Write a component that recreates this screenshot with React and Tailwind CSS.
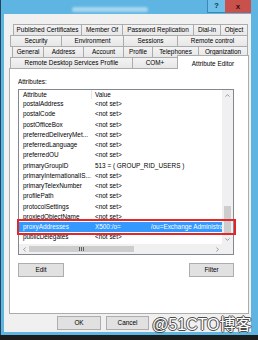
import { ChevronUp, ChevronDown, ChevronLeft, ChevronRight } from 'lucide-react';

const TAB_ROWS = [
  {
    offset: 'ml-[9px]',
    tabs: [
      ['Published Certificates', 'w-[69px]'],
      ['Member Of', 'w-[42px]'],
      ['Password Replication', 'w-[72px]'],
      ['Dial-in', 'w-[28px]'],
      ['Object', 'w-[28px]'],
    ],
  },
  {
    offset: 'ml-[6px]',
    tabs: [
      ['Security', 'w-[52px]'],
      ['Environment', 'w-[63px]'],
      ['Sessions', 'w-[55px]'],
      ['Remote control', 'w-[71px]'],
    ],
  },
  {
    offset: 'ml-[8px]',
    tabs: [
      ['General', 'w-[32px]'],
      ['Address', 'w-[41px]'],
      ['Account', 'w-[41px]'],
      ['Profile', 'w-[30px]'],
      ['Telephones', 'w-[47px]'],
      ['Organization', 'w-[50px]'],
    ],
  },
];

const ATTRS = [
  ['postalAddress', '<not set>'],
  ['postalCode', '<not set>'],
  ['postOfficeBox', '<not set>'],
  ['preferredDeliveryMet...', '<not set>'],
  ['preferredLanguage', '<not set>'],
  ['preferredOU', '<not set>'],
  ['primaryGroupID', '513 = ( GROUP_RID_USERS )'],
  ['primaryInternationalIS...', '<not set>'],
  ['primaryTelexNumber', '<not set>'],
  ['profilePath', '<not set>'],
  ['protocolSettings', '<not set>'],
  ['proxiedObjectName', '<not set>'],
  ['proxyAddresses', null],
  ['publicDelegates', '<not set>'],
];

const tabBase =
  'h-[12px] -ml-px first:ml-0 border border-[#acacac] bg-linear-to-b from-[#f3f3f3] to-[#e7e7e7] flex items-center justify-center whitespace-nowrap leading-[10px]';

function Tab({ label, width }) {
  return <div className={`${tabBase} ${width}`}>{label}</div>;
}

function WinButton({ children, width }) {
  return (
    <div
      className={`${width} h-[14px] bg-[#e1e1e1] border border-[#adadad] flex items-center justify-center leading-[10px]`}
    >
      {children}
    </div>
  );
}

function ListRow({ attr, value }) {
  const selected = value === null;
  return (
    <div
      className={`h-[10.25px] shrink-0 flex items-center leading-[10px] whitespace-nowrap ${
        selected ? 'bg-[#3399ff] text-white' : ''
      }`}
    >
      <div className="w-[73px] shrink-0 pl-[4px] overflow-hidden">{attr}</div>
      <div className="flex-1 min-w-0 pl-[3px] overflow-hidden flex">
        {selected ? (
          <>
            <span>X500:/o=</span>
            <span className="w-[30px] shrink-0" />
            <span className="overflow-hidden">/ou=Exchange Administrati</span>
          </>
        ) : (
          value
        )}
      </div>
    </div>
  );
}

export default function App() {
  return (
    <div
      className="w-[258px] h-[340px] bg-[#1c1c1c] overflow-hidden text-[6.4px] text-black"
      style={{ fontFamily: '"Liberation Sans", Arial, sans-serif' }}
    >
      <div className="h-[335px] bg-[#5fb5e2] border-l border-[#22445a] pl-[3px] pr-[7px] pb-[3px] flex flex-col">
        {/* Title bar */}
        <div className="h-[14px] shrink-0 flex">
          <div className="flex-1 flex pt-[7px] pl-[68px]">
            <div className="w-[76px] h-[5px] bg-[#a6d6ef] blur-[1px] rounded-sm" />
          </div>
          <div className="w-[18px] h-[13px] bg-[#6fc0e8] border-l border-b border-[#3f87b3] flex items-center justify-center text-[8px] font-bold text-[#123552] leading-none">
            ?
          </div>
          <div className="w-[26px] h-[13px] bg-[#c9514b] flex items-center justify-center text-[8px] font-bold text-[#3a0d0b] leading-none">
            x
          </div>
        </div>

        {/* Dialog body */}
        <div className="flex-1 bg-[#f0f0f0] flex flex-col relative pt-[10px]">
          {/* Tabs */}
          {TAB_ROWS.map((row, i) => (
            <div key={i} className={`flex -mt-px first:mt-0 ${row.offset}`}>
              {row.tabs.map(([label, width]) => (
                <Tab key={label} label={label} width={width} />
              ))}
            </div>
          ))}
          <div className="flex -mt-px ml-[6px] items-start">
            <Tab label="Remote Desktop Services Profile" width="w-[123px]" />
            <Tab label="COM+" width="w-[46px]" />
            <div className="relative z-10 -ml-px -mt-[2px] w-[72px] h-[14px] bg-white border border-b-0 border-[#acacac] flex justify-center pt-[3px] leading-[10px] whitespace-nowrap">
              Attribute Editor
            </div>
          </div>

          {/* Tab panel */}
          <div className="-mt-px ml-[5px] w-[240px] h-[246px] bg-white border border-[#acacac] pl-[8px] pt-[9px] flex flex-col">
            <div className="leading-[8px]">Attributes:</div>

            <div className="relative mt-[3px] w-[216px] h-[166px] border border-[#828790] flex flex-col">
              <div className="flex-1 min-h-0 flex">
                <div className="flex-1 min-w-0 flex flex-col overflow-hidden">
                  <div className="h-[9px] shrink-0 flex items-center leading-[9px]">
                    <div className="w-[73px] pl-[4px] border-r border-[#e5e5e5] h-full flex items-center">
                      Attribute
                    </div>
                    <div className="pl-[3px]">Value</div>
                  </div>
                  {ATTRS.map(([attr, value]) => (
                    <ListRow key={attr} attr={attr} value={value} />
                  ))}
                </div>
                <div className="w-[11px] shrink-0 bg-[#f0f0f0] flex flex-col">
                  <div className="h-[10px] flex items-center justify-center text-[#606060]">
                    <ChevronUp size={7} strokeWidth={2} />
                  </div>
                  <div className="flex-1" />
                  <div className="h-[27px] mx-[2px] mb-[1px] bg-[#cdcdcd]" />
                  <div className="h-[10px] flex items-center justify-center text-[#606060]">
                    <ChevronDown size={7} strokeWidth={2} />
                  </div>
                </div>
              </div>
              <div className="h-[10px] shrink-0 flex bg-[#f0f0f0]">
                <div className="w-[10px] flex items-center justify-center text-[#606060]">
                  <ChevronLeft size={7} strokeWidth={2} />
                </div>
                <div className="w-[105px] my-[2px] bg-[#cdcdcd] flex items-center justify-center">
                  <div className="flex gap-[1px]">
                    <div className="w-px h-[4px] bg-[#606060]" />
                    <div className="w-px h-[4px] bg-[#606060]" />
                    <div className="w-px h-[4px] bg-[#606060]" />
                  </div>
                </div>
                <div className="flex-1" />
                <div className="w-[10px] flex items-center justify-center text-[#606060]">
                  <ChevronRight size={7} strokeWidth={2} />
                </div>
                <div className="w-[11px] bg-[#f0f0f0]" />
              </div>

              {/* Red highlight annotation */}
              <div className="absolute left-[-2px] top-[129px] w-[219px] h-[16px] border-2 border-[#e3262a] z-20" />
            </div>

            <div className="mt-[8px] w-[216px] flex justify-between">
              <WinButton width="w-[46px]">Edit</WinButton>
              <WinButton width="w-[45px]">Filter</WinButton>
            </div>
          </div>

          {/* Dialog buttons */}
          <div className="mt-[2px] ml-[53px] flex gap-[5px]">
            <WinButton width="w-[44px]">OK</WinButton>
            <WinButton width="w-[43px]">Cancel</WinButton>
          </div>

          {/* Watermark */}
          <div
            className="absolute left-[148px] top-[302px] text-[16px] leading-[18px] text-white whitespace-nowrap [text-shadow:1px_0_#4a4a4a,-1px_0_#4a4a4a,0_1px_#4a4a4a,0_-1px_#4a4a4a]"
            style={{ fontFamily: '"Liberation Sans", "Noto Sans CJK SC", sans-serif' }}
          >
            @51CTO博客
          </div>
        </div>
      </div>
    </div>
  );
}
